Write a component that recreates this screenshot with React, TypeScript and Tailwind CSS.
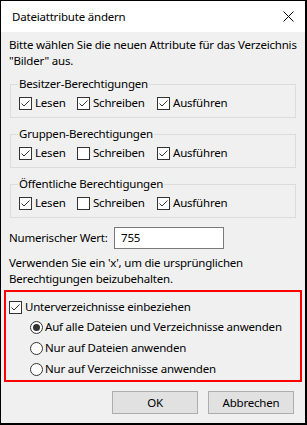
import React from 'react';

const font = { fontFamily: '"Noto Sans", "Open Sans", sans-serif' };

function Check({ checked }: { checked: boolean }) {
  return (
    <span className="w-[13px] h-[13px] border border-[#333333] bg-white flex items-center justify-center shrink-0">
      {checked && (
        <svg width="11" height="11" viewBox="0 0 11 11">
          <path d="M1.5 5.5 L4 8 L9.5 2.5" fill="none" stroke="#333333" strokeWidth="1" />
        </svg>
      )}
    </span>
  );
}

function Radio({ checked }: { checked: boolean }) {
  return (
    <span className="w-[13px] h-[13px] rounded-full border border-[#333333] bg-white flex items-center justify-center shrink-0">
      {checked && <span className="w-[7px] h-[7px] rounded-full bg-[#333333]" />}
    </span>
  );
}

function Opt({ label, checked, w }: { label: string; checked: boolean; w: string }) {
  return (
    <div className={`flex items-center gap-[3px] ${w}`}>
      <Check checked={checked} />
      <span>{label}</span>
    </div>
  );
}

function Group({ title, perms }: { title: string; perms: boolean[] }) {
  return (
    <fieldset className="border border-[#dcdcdc] ml-px mr-[1px] px-[8px] pt-[3px] pb-[6px]">
      <legend className="px-[1px] -ml-px leading-4">{title}</legend>
      <div className="flex leading-4">
        <Opt label="Lesen" checked={perms[0]} w="w-[58px]" />
        <Opt label="Schreiben" checked={perms[1]} w="w-[80px]" />
        <Opt label="Ausführen" checked={perms[2]} w="w-[90px]" />
      </div>
    </fieldset>
  );
}

export default function App() {
  return (
    <div
      className="w-[307px] h-[425px] bg-[#f0f0f0] border-l border-t border-r-2 border-b-2 border-black flex flex-col text-[11.5px] tracking-[-0.2px] text-black overflow-hidden whitespace-nowrap"
      style={font}
    >
      <div className="h-[31px] bg-white flex items-center justify-between pl-[11px] pr-[11px] shrink-0">
        <span>Dateiattribute ändern</span>
        <svg width="11" height="11" viewBox="0 0 11 11">
          <path d="M0.5 0.5 L10.5 10.5 M10.5 0.5 L0.5 10.5" stroke="#000" strokeWidth="1" />
        </svg>
      </div>

      <div className="flex flex-col px-[8px] pt-[5px]">
        <p className="leading-4">
          Bitte wählen Sie die neuen Attribute für das Verzeichnis
          <br />
          "Bilder" aus.
        </p>

        <div className="flex flex-col gap-[8px] mt-[7px]">
          <Group title="Besitzer-Berechtigungen" perms={[true, true, true]} />
          <Group title="Gruppen-Berechtigungen" perms={[true, false, true]} />
          <Group title="Öffentliche Berechtigungen" perms={[true, false, true]} />
        </div>

        <div className="flex items-center mt-[9px] h-[22px]">
          <span className="w-[105px]">Numerischer Wert:</span>
          <div className="w-[110px] h-[22px] border border-[#7a7a7a] bg-white flex items-center px-[6px]">755</div>
        </div>

        <p className="leading-4 mt-[6px]">
          Verwenden Sie ein 'x', um die ursprünglichen
          <br />
          Berechtigungen beizubehalten.
        </p>
      </div>

      <div className="mx-[3px] mt-[3px] border-2 border-[#ff0000] flex flex-col pt-[7px] pb-[3px] pl-[3px]">
        <div className="flex items-center gap-[3px] leading-4">
          <Check checked={true} />
          <span>Unterverzeichnisse einbeziehen</span>
        </div>
        <div className="flex flex-col gap-[5px] pl-[21px] mt-[4px]">
          <div className="flex items-center gap-[2px] leading-4">
            <Radio checked={true} />
            <span>Auf alle Dateien und Verzeichnisse anwenden</span>
          </div>
          <div className="flex items-center gap-[2px] leading-4">
            <Radio checked={false} />
            <span>Nur auf Dateien anwenden</span>
          </div>
          <div className="flex items-center gap-[2px] leading-4">
            <Radio checked={false} />
            <span>Nur auf Verzeichnisse anwenden</span>
          </div>
        </div>
      </div>

      <div className="flex justify-end gap-[10px] pr-[11px] mt-[9px]">
        <button className="w-[86px] h-[23px] bg-[#e1e1e1] border border-[#adadad]">OK</button>
        <button className="w-[86px] h-[23px] bg-[#e1e1e1] border border-[#adadad]">Abbrechen</button>
      </div>
    </div>
  );
}
